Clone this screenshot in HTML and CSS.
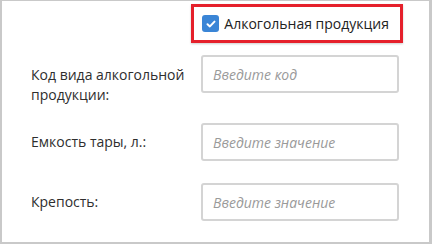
FILE: index.html
```html
<!DOCTYPE html>
<html lang="ru">
<head>
    <meta charset="UTF-8">
    <title>Алкогольная продукция</title>
    <link rel="stylesheet" href="styles.css">
</head>
<body>
    <div class="panel">
        <div class="panel-head">
            <label class="check-label">
                <span class="check-box">
                    <svg width="10" height="8" viewBox="0 0 10 8"><path d="M1.5 4.2 L3.9 6.4 L8.5 1.6" fill="none" stroke="#fff" stroke-width="2" stroke-linecap="round" stroke-linejoin="round"/></svg>
                </span>
                Алкогольная продукция
            </label>
        </div>
        <div class="form-row form-row-top">
            <label class="form-label" for="code">Код вида алкогольной продукции:</label>
            <input class="form-input" id="code" type="text" placeholder="Введите код">
        </div>
        <div class="form-row form-row-mid">
            <label class="form-label" for="volume">Емкость тары, л.:</label>
            <input class="form-input" id="volume" type="text" placeholder="Введите значение">
        </div>
        <div class="form-row">
            <label class="form-label" for="strength">Крепость:</label>
            <input class="form-input" id="strength" type="text" placeholder="Введите значение">
        </div>
    </div>
</body>
</html>
```

FILE: styles.css
```css
body {
    margin: 0;
    font-family: "Open Sans", Arial, sans-serif;
    font-size: 14px;
    color: #333;
    background: #fff;
}
.panel {
    box-sizing: border-box;
    width: 432px;
    height: 244px;
    border: 2px solid #c9c9c9;
    border-top-width: 1px;
    border-right-width: 3px;
    padding: 3px 29px 0 29px;
}
.panel-head {
    display: flex;
    justify-content: flex-end;
    margin-right: -3px;
}
.check-label {
    display: flex;
    align-items: center;
    gap: 5px;
    box-sizing: border-box;
    height: 39px;
    padding: 0 11px 0 8px;
    border: 3px solid #e5202b;
    color: #222;
    box-shadow: 0 1px 2px rgba(0,0,0,0.2);
}
.check-box {
    display: flex;
    align-items: center;
    justify-content: center;
    width: 17px;
    height: 17px;
    border-radius: 3px;
    background: #3a85d6;
}
.form-row {
    display: flex;
    align-items: center;
}
.form-row-top {
    align-items: flex-start;
    margin-top: 12px;
    margin-bottom: 18px;
}
.form-row-top .form-label {
    padding-top: 10px;
}
.form-row-mid {
    margin-bottom: 22px;
}
.form-label {
    width: 170px;
    line-height: 20px;
    color: #2e2e2e;
}
.form-input {
    box-sizing: border-box;
    width: 198px;
    height: 38px;
    padding: 0 10px;
    border: 2px solid #d4d4d4;
    border-radius: 3px;
    font-family: "Open Sans", Arial, sans-serif;
    font-size: 14px;
    color: #333;
}
.form-input::placeholder {
    color: #9a9a9a;
    font-style: italic;
}
```
